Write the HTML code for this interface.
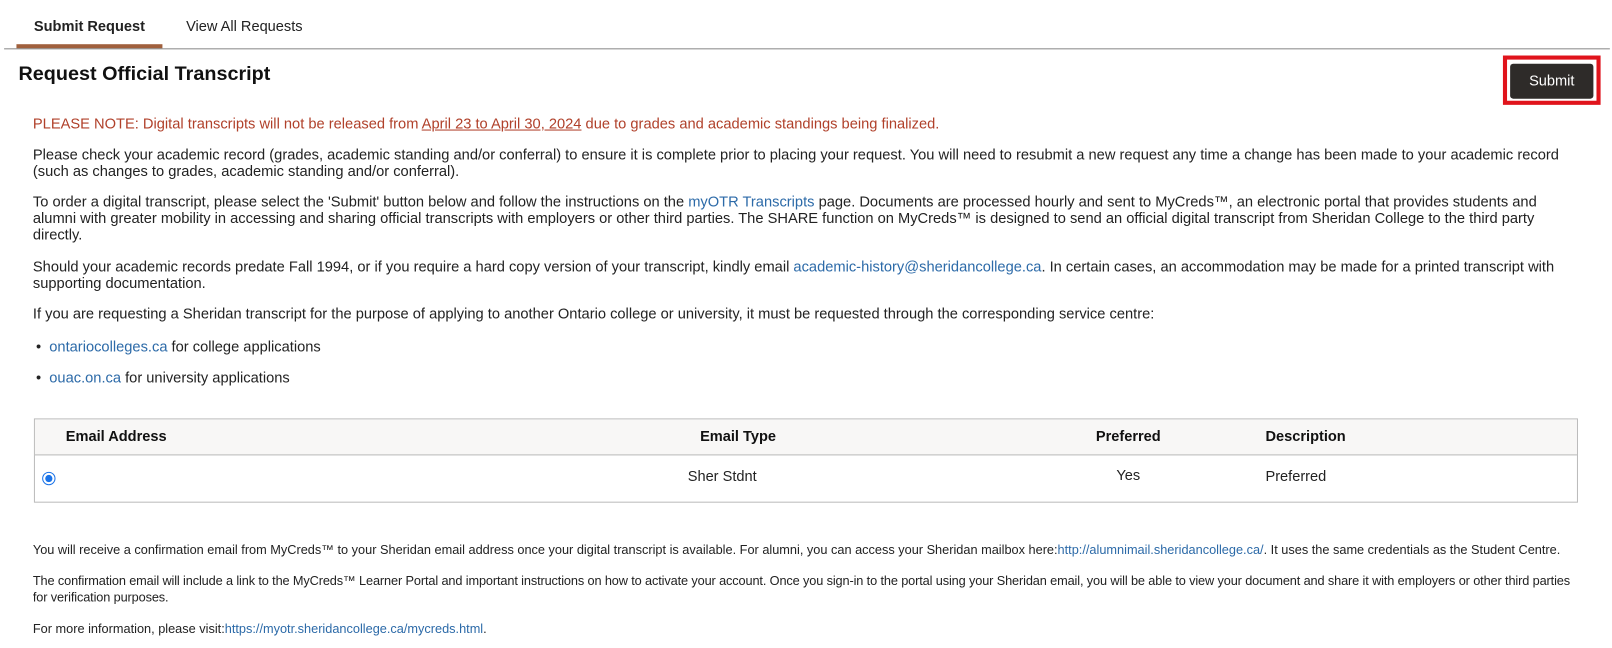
<!DOCTYPE html>
<html><head><meta charset="utf-8"><style>
*{margin:0;padding:0;box-sizing:border-box}
body{width:1612px;height:648px;background:#fff;font-family:"Liberation Sans",Arial,sans-serif;color:#222;position:relative;overflow:hidden}
#w{position:absolute;left:0;top:0;width:1568px;height:630px;transform:scale(1.028);transform-origin:0 0}
.a{position:absolute;white-space:nowrap}
a{color:#2c6aa8;text-decoration:none}
.p{font-size:14.28px;line-height:16px;left:32px}
.f{font-size:12.4px;line-height:16px;left:32px;color:#222}
.t{font-size:14.2px}
</style></head><body><div id="w">
<div class="a t" style="left:33px;top:18px;font-weight:bold;color:#222">Submit Request</div>
<div class="a t" style="left:181px;top:18px;color:#222">View All Requests</div>
<div class="a" style="left:16px;top:43px;width:142px;height:4px;background:#a0603d"></div>
<div class="a" style="left:4px;top:47px;width:1562px;height:1px;background:#888"></div>
<div class="a" style="left:18px;top:62px;font-size:19.25px;font-weight:bold;color:#111">Request Official Transcript</div>
<div class="a" style="left:1462px;top:54px;width:95px;height:48px;border:4px solid #e0141c"></div>
<div class="a t" style="left:1469px;top:62px;width:81px;height:34px;background:#2e2b29;border-radius:3px;color:#fff;line-height:34px;text-align:center">Submit</div>
<div class="a p" style="top:113px;color:#b0402a">PLEASE NOTE: Digital transcripts will not be released from <u>April 23 to April 30, 2024</u> due to grades and academic standings being finalized.</div>
<div class="a p" style="top:143px">Please check your academic record (grades, academic standing and/or conferral) to ensure it is complete prior to placing your request. You will need to resubmit a new request any time a change has been made to your academic record<br>(such as changes to grades, academic standing and/or conferral).</div>
<div class="a p" style="top:189px">To order a digital transcript, please select the 'Submit' button below and follow the instructions on the <a>myOTR Transcripts</a> page. Documents are processed hourly and sent to MyCreds™, an electronic portal that provides students and<br>alumni with greater mobility in accessing and sharing official transcripts with employers or other third parties. The SHARE function on MyCreds™ is designed to send an official digital transcript from Sheridan College to the third party<br>directly.</div>
<div class="a p" style="top:252px">Should your academic records predate Fall 1994, or if you require a hard copy version of your transcript, kindly email <a>academic-history@sheridancollege.ca</a>. In certain cases, an accommodation may be made for a printed transcript with<br>supporting documentation.</div>
<div class="a p" style="top:298px">If you are requesting a Sheridan transcript for the purpose of applying to another Ontario college or university, it must be requested through the corresponding service centre:</div>
<div class="a p" style="top:330px;left:35px">•&nbsp; <a>ontariocolleges.ca</a> for college applications</div>
<div class="a p" style="top:360px;left:35px">•&nbsp; <a>ouac.on.ca</a> for university applications</div>
<div class="a" style="left:33px;top:407px;width:1502px;height:82px;border:1px solid #bbb">
 <div class="a" style="left:0;top:0;width:1500px;height:35px;background:#f8f7f6;border-bottom:1px solid #bbb"></div>
 <div class="a t" style="left:30px;top:9px;font-weight:bold;color:#111">Email Address</div>
 <div class="a t" style="left:647px;top:9px;font-weight:bold;color:#111">Email Type</div>
 <div class="a t" style="left:1032px;top:9px;font-weight:bold;color:#111">Preferred</div>
 <div class="a t" style="left:1197px;top:9px;font-weight:bold;color:#111">Description</div>
 <div class="a" style="left:7px;top:51px;width:13px;height:13px;border-radius:50%;border:1.5px solid #1a73e8;background:#fff"><div style="margin:2px;width:7px;height:7px;border-radius:50%;background:#1a73e8"></div></div>
 <div class="a t" style="left:635px;top:48px">Sher Stdnt</div>
 <div class="a t" style="left:1052px;top:47px">Yes</div>
 <div class="a t" style="left:1197px;top:48px">Preferred</div>
</div>
<div class="a f" style="top:527px">You will receive a confirmation email from MyCreds™ to your Sheridan email address once your digital transcript is available. For alumni, you can access your Sheridan mailbox here:<a>http://alumnimail.sheridancollege.ca/</a>. It uses the same credentials as the Student Centre.</div>
<div class="a f" style="top:557px;letter-spacing:-0.12px">The confirmation email will include a link to the MyCreds™ Learner Portal and important instructions on how to activate your account. Once you sign-in to the portal using your Sheridan email, you will be able to view your document and share it with employers or other third parties<br>for verification purposes.</div>
<div class="a f" style="top:604px">For more information, please visit:<a>https://myotr.sheridancollege.ca/mycreds.html</a>.</div>
</div></body></html>
